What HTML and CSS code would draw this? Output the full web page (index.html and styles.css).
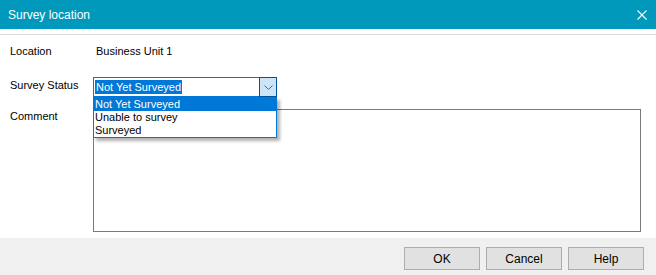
FILE: index.html
```
<html>
<head>
	<title>Survey location</title>
	<meta charset="utf-8" />
	<link rel="stylesheet" href="styles.css">
</head>
<body>
	<div class="dialog">
		<div class="titlebar">
			<span class="title">Survey location</span>
			<svg class="close" width="10" height="10" viewBox="0 0 10 10">
				<path d="M0.5 0.5 L9.5 9.5 M9.5 0.5 L0.5 9.5" stroke="#ffffff" stroke-width="1.1" fill="none" />
			</svg>
		</div>
		<div class="separator"></div>
		<div class="content">
			<div class="row row-location">
				<span class="label">Location</span>
				<span class="value">Business Unit 1</span>
			</div>
			<div class="row row-status">
				<span class="label label-status">Survey Status</span>
				<div class="combo">
					<span class="combo-text"><span class="combo-selected">Not Yet Surveyed</span></span>
					<span class="combo-button">
						<svg width="9" height="5" viewBox="0 0 9 5">
							<path d="M0.5 0.5 L4.5 4.5 L8.5 0.5" stroke="#606060" stroke-width="1" fill="none" />
						</svg>
					</span>
					<!-- open list sits over the comment box -->
					<div class="combo-list">
						<div class="combo-item selected">Not Yet Surveyed</div>
						<div class="combo-item">Unable to survey</div>
						<div class="combo-item">Surveyed</div>
					</div>
				</div>
			</div>
			<div class="row row-comment">
				<span class="label label-comment">Comment</span>
				<div class="comment-box"></div>
			</div>
		</div>
		<div class="footer">
			<button class="btn">OK</button>
			<button class="btn">Cancel</button>
			<button class="btn">Help</button>
		</div>
	</div>
</body>
</html>
```

FILE: styles.css
```
body {
	margin: 0;
	background-color: #ffffff;
	font-family: "Liberation Sans", Arial, sans-serif;
	font-size: 11px;
	color: #000000;
}
.dialog {
	width: 656px;
	height: 275px;
	display: flex;
	flex-direction: column;
	overflow: hidden;
}

/* Title bar */
.titlebar {
	height: 29px;
	background-color: #0099bc;
	display: flex;
	align-items: center;
	justify-content: space-between;
	padding: 0 9px 0 8px;
	flex: 0 0 auto;
}
.title {
	color: #ffffff;
	font-size: 12px;
}
.close {
	display: block;
}
.separator {
	height: 1px;
	margin-top: 5px;
	background-color: #dadada;
	flex: 0 0 auto;
}

/* Form */
.content {
	padding: 10px 0 0 10px;
	flex: 0 0 auto;
}
.row {
	display: flex;
	line-height: 13px;
}
.label {
	width: 83px;
	flex: 0 0 auto;
}
.value {
	padding-left: 3px;
}
.row-status {
	margin-top: 19px;
}
.label-status {
	padding-top: 2px;
}
.row-comment {
	margin-top: 12px;
}
.label-comment {
	padding-top: 1px;
}

.combo {
	position: relative;
	width: 184px;
	height: 20px;
	box-sizing: border-box;
	border: 1px solid #0078d7;
	display: flex;
	z-index: 5;
}
.combo-text {
	flex: 1 1 auto;
	padding: 2px 0 0 1px;
}
.combo-selected {
	display: inline-block;
	background-color: #0078d7;
	color: #ffffff;
	padding: 0 1px;
	line-height: 14px;
}
.combo-button {
	width: 16px;
	margin: -1px -1px -1px 0;
	border: 1px solid #005499;
	background-color: #cce4f7;
	display: flex;
	align-items: center;
	justify-content: center;
}
.combo-list {
	position: absolute;
	top: 19px;
	left: -1px;
	width: 184px;
	box-sizing: border-box;
	border: 1px solid #0078d7;
	background-color: #ffffff;
	box-shadow: 3px 3px 3px rgba(0, 0, 0, 0.3);
}
.combo-item {
	height: 13px;
	line-height: 13px;
	padding-left: 1px;
}
.combo-item.selected {
	background-color: #0078d7;
	color: #ffffff;
}

.comment-box {
	width: 548px;
	height: 123px;
	box-sizing: border-box;
	border: 1px solid #7a7a7a;
	background-color: #ffffff;
}

/* Footer */
.footer {
	margin-top: auto;
	height: 37px;
	background-color: #f0f0f0;
	display: flex;
	justify-content: flex-end;
	align-items: flex-start;
	gap: 6px;
	padding: 9px 12px 0 0;
	box-sizing: border-box;
	flex: 0 0 auto;
}
.btn {
	width: 76px;
	height: 23px;
	border: 1px solid #adadad;
	background-color: #e1e1e1;
	font-family: "Liberation Sans", Arial, sans-serif;
	font-size: 12px;
	color: #000000;
	padding: 0;
}
```
